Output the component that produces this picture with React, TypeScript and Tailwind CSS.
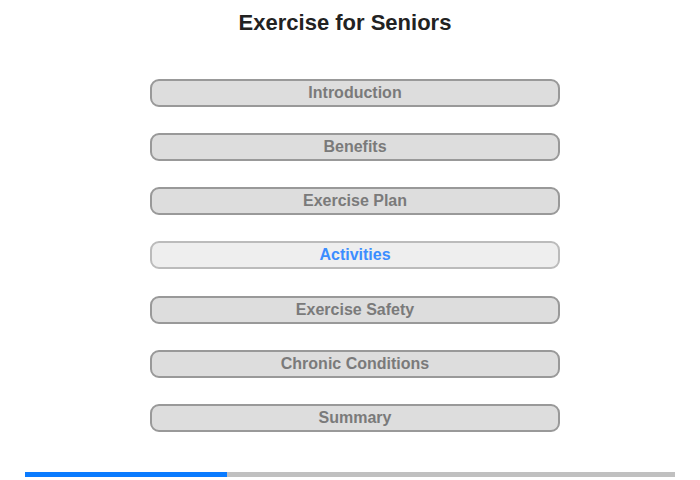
const items = [
  'Introduction',
  'Benefits',
  'Exercise Plan',
  'Activities',
  'Exercise Safety',
  'Chronic Conditions',
  'Summary',
]

export default function App() {
  const active = 3
  return (
    <div className="w-[700px] h-[480px] bg-white flex flex-col font-['Liberation_Sans',Arial,sans-serif]">
      <h1 className="pt-[10px] pr-[10px] h-[35px] text-center text-[22px] leading-[26px] font-bold text-[#222]">
        Exercise for Seniors
      </h1>

      <div className="mt-[44px] ml-[150px] w-[410px] flex flex-col gap-[26px]">
        {items.map((label, i) => (
          <div
            key={label}
            className={
              (i === 4 ? 'mt-[1px] ' : '') +
              (i === active
                ? 'h-[28px] rounded-[9px] border-2 border-[#bbb] bg-[#eee] flex items-center justify-center text-[16px] font-bold text-[#3b8dff]'
                : 'h-[28px] rounded-[9px] border-2 border-[#999] bg-[#ddd] flex items-center justify-center text-[16px] font-bold text-[#7a7a7a]')
            }
          >
            {label}
          </div>
        ))}
      </div>

      <div className="mt-auto mb-[3px] mx-auto w-[650px] h-[5px] bg-[#c0c0c0] flex">
        <div className="w-[202px] h-full bg-[#0a7bff]"></div>
      </div>
    </div>
  )
}
